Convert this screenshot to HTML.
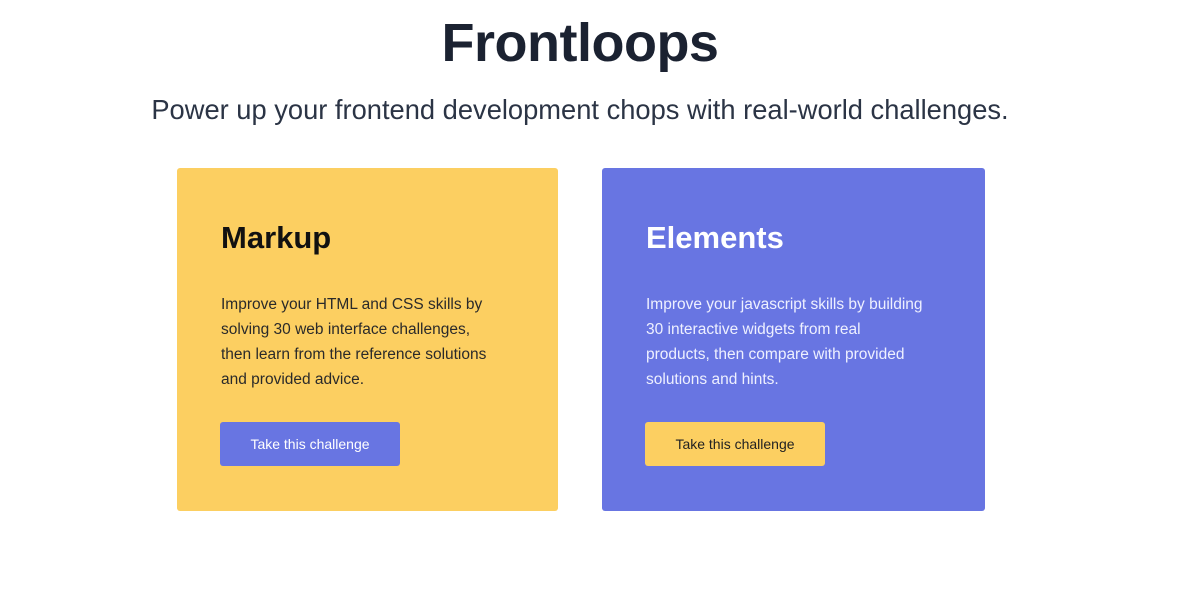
<!DOCTYPE html>
<html><head><style>
body{margin:0;width:1196px;height:596px;background:#fff;font-family:"Liberation Sans",sans-serif;position:relative;overflow:hidden}
h1{position:absolute;top:12px;left:0;width:1160px;text-align:center;margin:0;font-size:54px;font-weight:bold;color:#1b2231;letter-spacing:-0.5px}
.sub{position:absolute;top:94px;left:0;width:1160px;text-align:center;font-size:27.3px;color:#2b3445}
.card{position:absolute;top:168px;height:343px;border-radius:3px}
.card h2{position:absolute;left:44px;top:52px;margin:0;font-size:31px;font-weight:bold}
.card p{position:absolute;left:44px;top:124px;margin:0;width:281px;font-size:15.5px;line-height:25px}
.btn{position:absolute;left:43px;top:254px;width:180px;height:44px;border-radius:3px;font-size:14px;line-height:44px;text-align:center}
</style></head><body>
<h1>Frontloops</h1>
<div class="sub">Power up your frontend development chops with real-world challenges.</div>
<div class="card" style="left:177px;width:381px;background:#fccf61">
<h2 style="color:#111">Markup</h2>
<p style="color:#2a2a2a">Improve your HTML and CSS skills by solving 30 web interface challenges, then learn from the reference solutions and provided advice.</p>
<div class="btn" style="background:#6875e2;color:#fff">Take this challenge</div>
</div>
<div class="card" style="left:602px;width:383px;background:#6875e2">
<h2 style="color:#fff">Elements</h2>
<p style="color:#eef0ff">Improve your javascript skills by building 30 interactive widgets from real<br>products, then compare with provided solutions and hints.</p>
<div class="btn" style="background:#fccf61;color:#222">Take this challenge</div>
</div>
</body></html>
